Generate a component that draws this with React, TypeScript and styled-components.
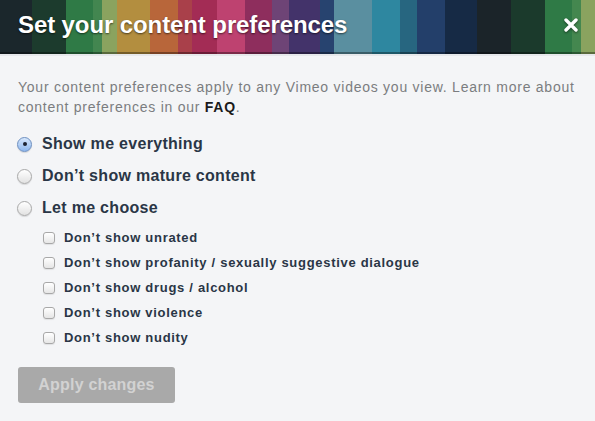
import React from "react";
import styled, { createGlobalStyle } from "styled-components";

const GlobalStyle = createGlobalStyle`
  html, body {
    margin: 0;
    padding: 0;
    background: #f4f5f7;
  }
  body {
    font-family: "Liberation Sans", Arial, Helvetica, sans-serif;
  }
`;

// stripe colours with their right edge in px
const stripes: [string, number][] = [
  ["#1b272c", 32],
  ["#1c3b2d", 66],
  ["#2f7a46", 93],
  ["#438650", 102],
  ["#8aa35f", 117],
  ["#b38e3f", 150],
  ["#b8663a", 178],
  ["#a9404a", 192],
  ["#a32c55", 217],
  ["#be4270", 245],
  ["#8e2e5d", 272],
  ["#6e4476", 289],
  ["#43336a", 320],
  ["#27436f", 334],
  ["#5a8fa0", 372],
  ["#2e87a0", 400],
  ["#276680", 417],
  ["#233f6a", 445],
  ["#162a45", 477],
  ["#1b2429", 511],
  ["#1b3a2c", 545],
  ["#2f7a46", 572],
  ["#44874f", 581],
  ["#8aa35f", 595],
];

const stripeGradient = (() => {
  let prev = 0;
  const stops = stripes.map(([c, end]) => {
    const s = `${c} ${prev}px, ${c} ${end}px`;
    prev = end;
    return s;
  });
  return `linear-gradient(to right, ${stops.join(", ")})`;
})();

const Dialog = styled.div`
  width: 595px;
  min-height: 421px;
  background: #f4f5f7;
`;

const Header = styled.header`
  height: 56px;
  display: flex;
  align-items: center;
  justify-content: space-between;
  padding: 0 17px 4px 18px;
  box-sizing: border-box;
  box-shadow: inset 0 -2px 0 rgba(0, 0, 0, 0.35);
  border-bottom: 2px solid #e6e8eb;
`;

const Title = styled.h1`
  margin: 0;
  color: #fff;
  font-size: 24px;
  font-weight: bold;
  letter-spacing: -0.1px;
  text-shadow: 0 1px 2px rgba(0, 0, 0, 0.6);
`;

const Close = styled.button`
  border: 0;
  background: none;
  padding: 0;
  width: 14px;
  height: 14px;
  display: flex;
  cursor: pointer;
  filter: drop-shadow(0 1px 1px rgba(0, 0, 0, 0.5));
`;

const Body = styled.div`
  padding: 21px 17px 0 18px;
`;

const Intro = styled.p`
  margin: 0 0 11px 0;
  font-size: 14px;
  letter-spacing: 0.75px;
  line-height: 20px;
  color: #7b7d80;

  b {
    color: #1a1a1a;
  }
`;

const RadioRow = styled.label`
  display: flex;
  align-items: center;
  gap: 10px;
  height: 32px;
  font-size: 16px;
  letter-spacing: 0.3px;
  font-weight: bold;
  color: #2a3646;
  cursor: pointer;
`;

const RadioDot = styled.span<{ $checked?: boolean }>`
  width: 15px;
  height: 15px;
  margin-left: -1px;
  border-radius: 50%;
  box-sizing: border-box;
  position: relative;
  border: 1px solid ${(p) => (p.$checked ? "#6d8fc0" : "#a9a9a9")};
  background: ${(p) =>
    p.$checked
      ? "linear-gradient(#d6e7fc, #8fb8ee)"
      : "linear-gradient(#ffffff, #e2e2e2)"};
  box-shadow: 0 1px 1px rgba(0, 0, 0, 0.12);

  &::after {
    content: "";
    display: ${(p) => (p.$checked ? "block" : "none")};
    position: absolute;
    left: 50%;
    top: 50%;
    width: 4px;
    height: 4px;
    margin: -2px 0 0 -2px;
    border-radius: 50%;
    background: #1d2330;
  }
`;

const Checks = styled.div`
  padding: 1px 0 0 25px;
  display: flex;
  flex-direction: column;
`;

const CheckRow = styled.label`
  display: flex;
  align-items: center;
  gap: 9px;
  height: 25px;
  font-size: 13px;
  font-weight: bold;
  letter-spacing: 0.7px;
  color: #2a3646;
  cursor: pointer;
`;

const CheckBox = styled.span`
  width: 12px;
  height: 12px;
  box-sizing: border-box;
  border-radius: 3px;
  border: 1px solid #a8a8a8;
  background: linear-gradient(#ffffff, #e6e6e6);
  box-shadow: 0 1px 1px rgba(0, 0, 0, 0.08);
`;

const ApplyButton = styled.button`
  margin-top: 17px;
  width: 157px;
  height: 36px;
  border: 0;
  border-radius: 3px;
  background: #a9a9a9;
  color: #d2d2d2;
  font-family: inherit;
  font-size: 16px;
  letter-spacing: 0.2px;
  font-weight: bold;
  cursor: default;
`;

const options = ["Show me everything", "Don’t show mature content", "Let me choose"];
const filters = [
  "Don’t show unrated",
  "Don’t show profanity / sexually suggestive dialogue",
  "Don’t show drugs / alcohol",
  "Don’t show violence",
  "Don’t show nudity",
];

export default function App() {
  return (
    <>
      <GlobalStyle />
      <Dialog>
        <Header style={{ background: stripeGradient }}>
          <Title>Set your content preferences</Title>
          <Close aria-label="Close">
            <svg width="14" height="14" viewBox="0 0 14 14">
              <path d="M2 2 L12 12 M12 2 L2 12" stroke="#fff" strokeWidth="3.4" strokeLinecap="round" />
            </svg>
          </Close>
        </Header>
        <Body>
          <Intro>
            Your content preferences apply to any Vimeo videos you view. Learn more about
            content preferences in our <b>FAQ</b>.
          </Intro>
          {options.map((o, i) => (
            <RadioRow key={o}>
              <RadioDot $checked={i === 0} />
              {o}
            </RadioRow>
          ))}
          <Checks>
            {filters.map((f) => (
              <CheckRow key={f}>
                <CheckBox />
                {f}
              </CheckRow>
            ))}
          </Checks>
          <ApplyButton disabled>Apply changes</ApplyButton>
        </Body>
      </Dialog>
    </>
  );
}
